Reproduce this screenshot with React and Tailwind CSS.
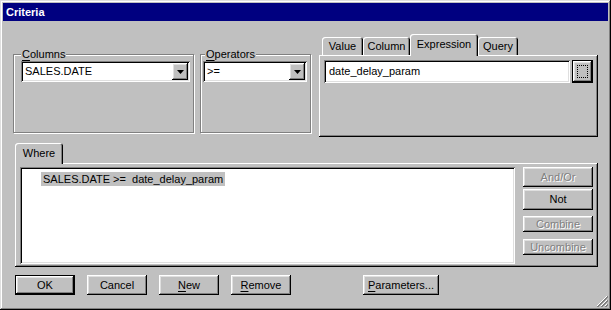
import React from "react";

const raised =
  "shadow-[inset_-1px_-1px_0_#000,inset_1px_1px_0_#fff,inset_-2px_-2px_0_#808080,inset_2px_2px_0_#dfdfdf]";
const sunken =
  "shadow-[inset_1px_1px_0_#808080,inset_-1px_-1px_0_#fff,inset_2px_2px_0_#000,inset_-2px_-2px_0_#dfdfdf]";

function U({ children }) {
  return <span className="underline underline-offset-[2px] decoration-1">{children}</span>;
}

function Button({ children, className = "", disabled = false, isDefault = false }) {
  if (isDefault) {
    return (
      <div className={"flex border border-black bg-[#c0c0c0] " + className}>
        <div className={"flex flex-1 items-center justify-center " + raised}>{children}</div>
      </div>
    );
  }
  return (
    <div
      className={
        "flex items-center justify-center bg-[#c0c0c0] " +
        raised +
        " " +
        (disabled ? "text-[#808080] [text-shadow:1px_1px_0_#fff] " : "text-black ") +
        className
      }
    >
      {children}
    </div>
  );
}

function Arrow() {
  return (
    <div className={"flex h-[17px] w-[16px] items-center justify-center bg-[#c0c0c0] " + raised}>
      <svg width="7" height="4" viewBox="0 0 7 4">
        <polygon points="0,0 7,0 3.5,4" fill="#000" />
      </svg>
    </div>
  );
}

function Combo({ value, className }) {
  return (
    <div className={"flex h-[21px] items-center bg-white p-[2px] " + sunken + " " + className}>
      <div className="flex-1 pl-[2px] leading-[13px]">{value}</div>
      <Arrow />
    </div>
  );
}

function Group({ label, labelLeft, className, children }) {
  return (
    <div
      className={
        "relative h-[79px] border border-[#808080] shadow-[inset_1px_1px_0_#fff,1px_1px_0_#fff] " + className
      }
    >
      <div className={"absolute -top-[7px] bg-[#c0c0c0] px-[1px] leading-[13px] " + labelLeft}>{label}</div>
      {children}
    </div>
  );
}

function Tab({ children, className, selected }) {
  return (
    <div
      className={
        "flex justify-center rounded-t-[3px] bg-[#c0c0c0] shadow-[inset_1px_1px_0_#fff,inset_-1px_0_0_#000,inset_-2px_0_0_#808080] leading-[13px] " +
        (selected ? "relative z-10 -mb-px pt-[4px] " : "pt-[3px] ") +
        className
      }
    >
      {children}
    </div>
  );
}

const panel = "shadow-[inset_-1px_-1px_0_#000,inset_1px_1px_0_#fff,inset_-2px_-2px_0_#808080]";

export default function App() {
  return (
    <div
      className={
        "relative h-[310px] w-[611px] bg-[#c0c0c0] p-[3px] text-[11px] text-black font-['Liberation_Sans',Arial,sans-serif] shadow-[inset_-1px_-1px_0_#000,inset_1px_1px_0_#dfdfdf,inset_-2px_-2px_0_#808080,inset_2px_2px_0_#fff]"
      }
    >
      <div className="flex h-[18px] items-center bg-[#000080] pl-[3px] text-[11px] font-bold text-white">
        Criteria
      </div>

      <div className="mt-[13px] flex items-start pl-[10px]">
        <Group label={<><U>C</U>olumns</>} labelLeft="left-[7px]" className="mt-[20px] w-[181px]">
          <Combo value="SALES.DATE" className="ml-[7px] mt-[6px] w-[169px]" />
        </Group>
        <Group label={<><U>O</U>perators</>} labelLeft="left-[4px]" className="ml-[6px] mt-[20px] w-[111px]">
          <Combo value=">=" className="ml-[2px] mt-[6px] w-[104px]" />
        </Group>

        <div className="ml-[8px] flex w-[279px] flex-col">
          <div className="flex h-[21px] items-end pl-[3px]">
            <Tab className="h-[18px] w-[41px]">Value</Tab>
            <Tab className="h-[18px] w-[47px]">Column</Tab>
            <Tab selected className="h-[22px] w-[68px]">Expression</Tab>
            <Tab className="h-[18px] w-[40px]">Query</Tab>
          </div>
          <div className={"flex h-[82px] items-start gap-[2px] bg-[#c0c0c0] p-[5px] " + panel}>
            <div className={"flex h-[23px] flex-1 items-center bg-white pl-[5px] " + sunken}>date_delay_param</div>
            <div className="flex h-[23px] w-[21px] border border-black">
              <div className={"flex flex-1 items-center justify-center " + raised}>
                <div className="h-[13px] w-[11px] border border-dotted border-black" />
              </div>
            </div>
          </div>
        </div>
      </div>

      <div className="ml-[12px] mt-[6px] flex w-[583px] flex-col">
        <div className="flex h-[20px] items-end">
          <Tab selected className="h-[21px] w-[48px]">Where</Tab>
        </div>
        <div className={"flex h-[104px] items-start bg-[#c0c0c0] pl-[5px] pt-[4px] " + panel}>
          <div className={"h-[97px] w-[495px] bg-white pl-[21px] pt-[4px] " + sunken}>
            <span className="inline-block h-[14px] bg-[#c0c0c0] px-[2px] leading-[14px]">
              SALES.DATE &gt;=&nbsp; date_delay_param
            </span>
          </div>
          <div className="ml-[8px] flex w-[70px] flex-col">
            <Button disabled className="h-[20px]">And/Or</Button>
            <Button className="mt-[2px] h-[21px]">Not</Button>
            <Button disabled className="mt-[6px] h-[16px]">Combine</Button>
            <Button disabled className="mt-[7px] h-[16px]">Uncombine</Button>
          </div>
        </div>
      </div>

      <div className="ml-[12px] mt-[8px] flex h-[20px] gap-[12px]">
        <Button isDefault className="w-[60px]">OK</Button>
        <Button className="w-[60px]">Cancel</Button>
        <Button className="w-[60px]"><U>N</U>ew</Button>
        <Button className="w-[60px]"><U>R</U>emove</Button>
        <Button className="ml-[60px] w-[76px]"><U>P</U>arameters...</Button>
      </div>

      <svg className="absolute bottom-[3px] right-[3px]" width="12" height="12" viewBox="0 0 12 12">
        <line x1="11" y1="1" x2="1" y2="11" stroke="#fff" />
        <line x1="12" y1="1" x2="1" y2="12" stroke="#808080" />
        <line x1="12" y1="2" x2="2" y2="12" stroke="#808080" />
        <line x1="11" y1="5" x2="5" y2="11" stroke="#fff" />
        <line x1="12" y1="5" x2="5" y2="12" stroke="#808080" />
        <line x1="12" y1="6" x2="6" y2="12" stroke="#808080" />
        <line x1="11" y1="9" x2="9" y2="11" stroke="#fff" />
        <line x1="12" y1="9" x2="9" y2="12" stroke="#808080" />
        <line x1="12" y1="10" x2="10" y2="12" stroke="#808080" />
      </svg>
    </div>
  );
}
